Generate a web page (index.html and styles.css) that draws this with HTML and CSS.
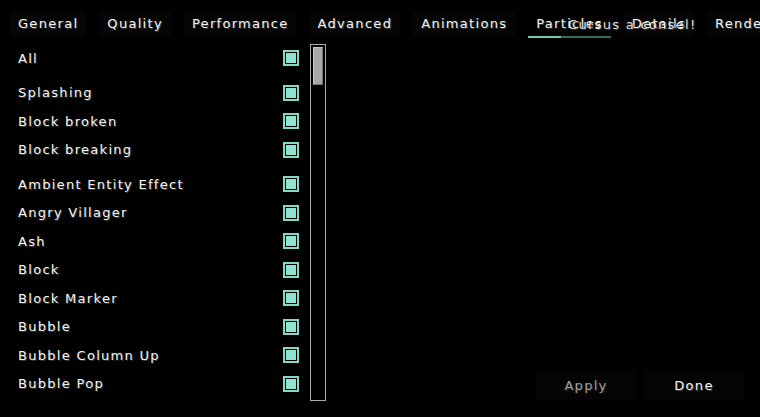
FILE: index.html
```html
<!DOCTYPE html>
<html>
<head>
<meta charset="utf-8">
<link rel="stylesheet" href="styles.css">
</head>
<body>
<div class="screen">
  <div class="tabs">
    <div class="tab">General</div>
    <div class="tab">Quality</div>
    <div class="tab">Performance</div>
    <div class="tab">Advanced</div>
    <div class="tab">Animations</div>
    <div class="tab active">Particles<span class="bar"><span class="fill"></span></span></div>
    <div class="tab">Details</div>
    <div class="tab">Render</div>
    <div class="ghost">Cursus a consel!</div>
  </div>
  <div class="main">
    <div class="list">
      <div class="row"><span>All</span><i class="cb"></i></div>
      <div class="row group"><span>Splashing</span><i class="cb"></i></div>
      <div class="row"><span>Block broken</span><i class="cb"></i></div>
      <div class="row"><span>Block breaking</span><i class="cb"></i></div>
      <div class="row group"><span>Ambient Entity Effect</span><i class="cb"></i></div>
      <div class="row"><span>Angry Villager</span><i class="cb"></i></div>
      <div class="row"><span>Ash</span><i class="cb"></i></div>
      <div class="row"><span>Block</span><i class="cb"></i></div>
      <div class="row"><span>Block Marker</span><i class="cb"></i></div>
      <div class="row"><span>Bubble</span><i class="cb"></i></div>
      <div class="row"><span>Bubble Column Up</span><i class="cb"></i></div>
      <div class="row"><span>Bubble Pop</span><i class="cb"></i></div>
    </div>
    <div class="scroll"><div class="thumb"></div></div>
    <div class="side">
      <div class="buttons">
        <div class="btn disabled">Apply</div>
        <div class="btn">Done</div>
      </div>
    </div>
  </div>
</div>
</body>
</html>
```
FILE: styles.css
```css
html, body {
  margin: 0;
  padding: 0;
  background: #000;
}
.screen {
  width: 760px;
  height: 417px;
  overflow: hidden;
  background: #000;
  font-family: "DejaVu Sans", sans-serif;
  font-size: 13px;
  letter-spacing: 1.3px;
  color: #f4f4f4;
  text-shadow: 1px 1px 0 #3a3a3a;
}
.tabs {
  position: relative;
  display: flex;
  gap: 13px;
  padding: 11px 0 0 10px;
  height: 26px;
  white-space: nowrap;
}
.tab {
  position: relative;
  flex: none;
  height: 26px;
  line-height: 26px;
  padding: 0 8px;
  background: #050505;
}
.tab.active {
  background: transparent;
}
.bar {
  position: absolute;
  left: 0;
  right: 0;
  bottom: -1px;
  height: 2px;
  background: #2f6b60;
}
.bar .fill {
  display: block;
  width: 33px;
  height: 2px;
  background: #74c9b4;
}
.ghost {
  position: absolute;
  left: 568px;
  top: 11px;
  line-height: 28px;
  color: #f2f2f2;
  opacity: 0.9;
}
.main {
  display: flex;
  height: 357px;
  padding-top: 7px;
}
.list {
  width: 280px;
  margin-left: 18px;
  margin-right: 12px;
}
.row {
  display: flex;
  justify-content: space-between;
  align-items: center;
  height: 28.5px;
}
.row.group {
  margin-top: 6px;
}
.cb {
  display: block;
  width: 10px;
  height: 10px;
  background: #8fe3cf;
  border: 1px solid #000;
  outline: 2px solid #86d8c4;
  outline-offset: 0;
  margin-right: 1px;
}
.scroll {
  width: 14px;
  height: 355px;
  border: 1px solid #a8a8a8;
  position: relative;
  flex: none;
}
.thumb {
  margin: 2px;
  width: 8px;
  height: 36px;
  background: #a8a8a8;
  border: 1px solid #c8c8c8;
  border-bottom-color: #6f6f6f;
  border-right-color: #6f6f6f;
}
.side {
  flex: 1;
  display: flex;
  flex-direction: column;
  justify-content: flex-end;
}
.buttons {
  display: flex;
  justify-content: flex-end;
  gap: 8px;
  padding-right: 16px;
}
.btn {
  width: 100px;
  height: 30px;
  line-height: 30px;
  text-align: center;
  background: #040404;
}
.btn.disabled {
  color: #a0a0a0;
  text-shadow: 1px 1px 0 #282828;
}
```
